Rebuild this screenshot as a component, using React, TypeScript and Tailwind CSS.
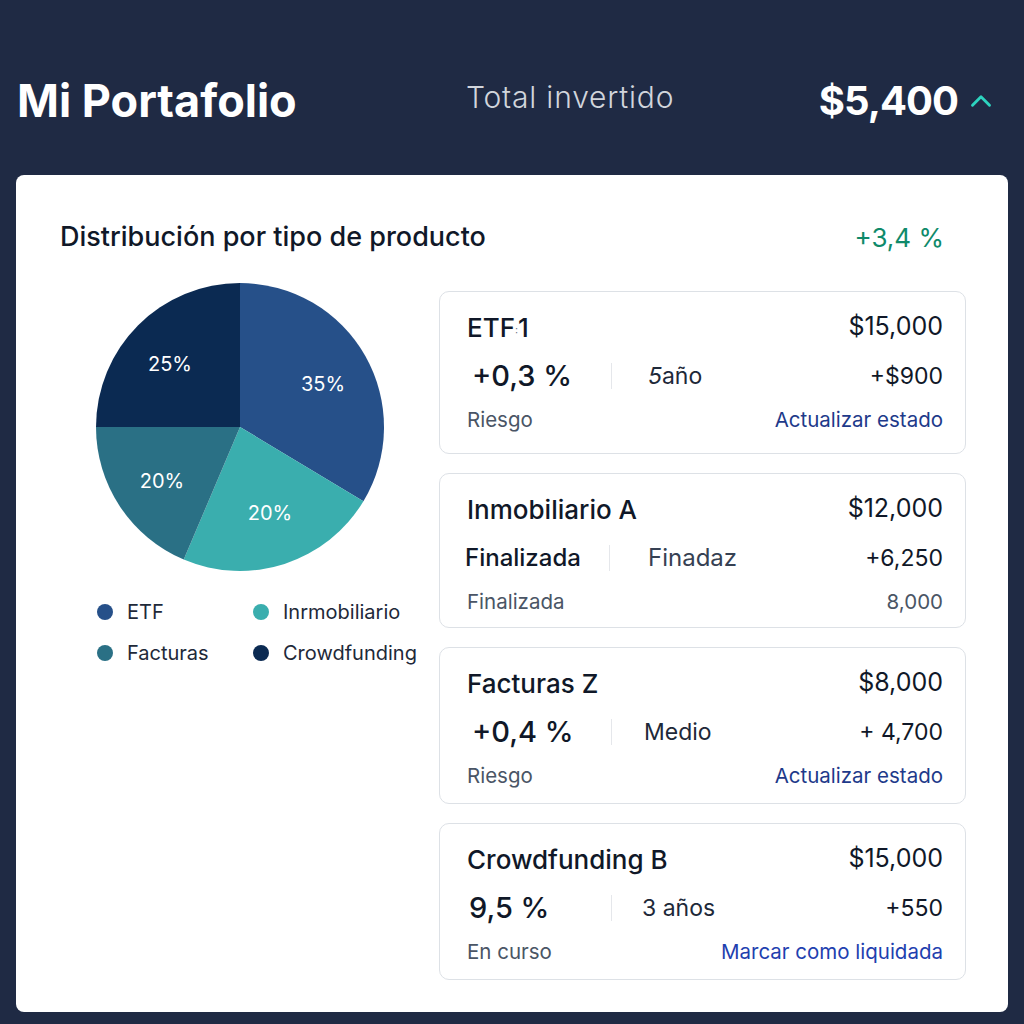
import { ChevronUp } from 'lucide-react';

type Product = {
  name: React.ReactNode;
  amount: string;
  rate: string;
  rateClass: string;
  middle: React.ReactNode;
  middleClass: string;
  gain: string;
  note: string;
  action: string;
  actionClass: string;
  height: string;
};

const products: Product[] = [
  {
    name: (
      <>
        ETF<span className="text-[11px] text-gray-500 align-middle">꞉</span>1
      </>
    ),
    amount: '$15,000',
    rate: '+0,3 %',
    rateClass: 'text-[29px] font-medium pl-[5px]',
    middle: (
      <>
        <span className="italic">5</span>año
      </>
    ),
    middleClass: 'pl-[36px] text-[23px] text-gray-800',
    gain: '+$900',
    note: 'Riesgo',
    action: 'Actualizar estado',
    actionClass: 'text-[#1e3a8a]',
    height: 'h-[163px]',
  },
  {
    name: 'Inmobiliario A',
    amount: '$12,000',
    rate: 'Finalizada',
    rateClass: 'text-[24px] font-medium -ml-[2px]',
    middle: 'Finadaz',
    middleClass: 'pl-[38px] text-[24px] text-gray-700',
    gain: '+6,250',
    note: 'Finalizada',
    action: '8,000',
    actionClass: 'text-gray-600',
    height: 'h-[155px]',
  },
  {
    name: 'Facturas Z',
    amount: '$8,000',
    rate: '+0,4 %',
    rateClass: 'text-[29px] font-medium pl-[5px]',
    middle: 'Medio',
    middleClass: 'pl-[32px] text-[23px] text-gray-800',
    gain: '+ 4,700',
    note: 'Riesgo',
    action: 'Actualizar estado',
    actionClass: 'text-[#1e3a8a]',
    height: 'h-[157px]',
  },
  {
    name: 'Crowdfunding B',
    amount: '$15,000',
    rate: '9,5 %',
    rateClass: 'text-[29px] font-medium pl-[2px]',
    middle: '3 años',
    middleClass: 'pl-[30px] text-[23px] text-gray-800',
    gain: '+550',
    note: 'En curso',
    action: 'Marcar como liquidada',
    actionClass: 'text-[#1e40af]',
    height: 'h-[157px]',
  },
];

const slices = [
  { from: 0, to: 121, color: '#265089', label: '35%', lx: 323, ly: 384 },
  { from: 121, to: 203, color: '#3aaeae', label: '20%', lx: 270, ly: 513 },
  { from: 203, to: 270, color: '#2a7085', label: '20%', lx: 162, ly: 481 },
  { from: 270, to: 360, color: '#0b2a52', label: '25%', lx: 170, ly: 364 },
];

function pt(cx: number, cy: number, r: number, deg: number) {
  const a = ((deg - 90) * Math.PI) / 180;
  return [cx + r * Math.cos(a), cy + r * Math.sin(a)];
}

function Pie() {
  const cx = 145;
  const cy = 145;
  const r = 144;
  return (
    <svg width="290" height="290" viewBox="0 0 290 290">
      {slices.map((s) => {
        const [x1, y1] = pt(cx, cy, r, s.from);
        const [x2, y2] = pt(cx, cy, r, s.to);
        const large = s.to - s.from > 180 ? 1 : 0;
        return (
          <path
            key={s.from}
            d={`M${cx} ${cy} L${x1} ${y1} A${r} ${r} 0 ${large} 1 ${x2} ${y2} Z`}
            fill={s.color}
          />
        );
      })}
      {slices.map((s) => (
        <text
          key={s.label + s.lx}
          x={s.lx - 95}
          y={s.ly - 282 + 7}
          textAnchor="middle"
          fill="#ffffff"
          fontSize="20"
          fontFamily="Inter, sans-serif"
        >
          {s.label}
        </text>
      ))}
    </svg>
  );
}

const legend = [
  { label: 'ETF', color: 'bg-[#265089]' },
  { label: 'Inrmobiliario', color: 'bg-[#3aaeae]' },
  { label: 'Facturas', color: 'bg-[#2a7085]' },
  { label: 'Crowdfunding', color: 'bg-[#0b2a52]' },
];

function ProductCard({ p }: { p: Product }) {
  return (
    <div className={`${p.height} rounded-[10px] border border-[#dde1e6] pl-[27px] pr-[22px] pt-[19px]`}>
      <div className="h-[32px] flex items-center justify-between text-gray-900">
        <span className="text-[26px] font-medium">{p.name}</span>
        <span className="text-[25px]">{p.amount}</span>
      </div>
      <div className="mt-[13px] h-[40px] flex items-center text-gray-900">
        <div className={`w-[144px] ${p.rateClass}`}>{p.rate}</div>
        <div className="w-px h-[26px] bg-gray-200" />
        <div className={p.middleClass}>{p.middle}</div>
        <div className="ml-auto text-[23px]">{p.gain}</div>
      </div>
      <div className="mt-[10px] h-[28px] flex items-center justify-between text-[20.5px]">
        <span className="text-gray-600">{p.note}</span>
        <span className={p.actionClass}>{p.action}</span>
      </div>
    </div>
  );
}

export default function App() {
  return (
    <div className="min-h-screen bg-[#1f2a44] font-['Inter',sans-serif]">
      {/* Header */}
      <div className="h-[175px] pt-[26px] flex items-center pl-[17px] pr-[26px]">
        <h1 className="w-[449px] text-[45px] font-bold text-white">Mi Portafolio</h1>
        <div className="text-[30px] font-light text-gray-300 tracking-[0.8px] -mt-[6px]">Total invertido</div>
        <div className="ml-auto flex items-center gap-[6px]">
          <span className="text-[40px] font-bold text-white tracking-[-1px]">$5,400</span>
          <ChevronUp className="w-[34px] h-[34px] text-[#2dd4bf]" strokeWidth={2} />
        </div>
      </div>

      {/* Card */}
      <div className="mx-[16px] h-[837px] bg-white rounded-[8px] pl-[44px] pr-[42px] pt-[46px]">
        <div className="h-[32px] flex items-center justify-between pr-[22px]">
          <h2 className="text-[27px] font-medium text-gray-900">Distribución por tipo de producto</h2>
          <span className="text-[26px] text-[#0f8a6a]">+3,4 %</span>
        </div>

        <div className="mt-[38px] flex">
          {/* Chart */}
          <div className="w-[379px] -mt-[9px]">
            <div className="ml-[35px]">
              <Pie />
            </div>
            <div className="mt-[26px] ml-[37px] grid grid-cols-[156px_1fr] gap-y-[13px] text-[20px] text-gray-800">
              {legend.map((l) => (
                <div key={l.label} className="h-[28px] flex items-center">
                  <span className={`w-[16px] h-[16px] rounded-full ${l.color}`} />
                  <span className="ml-[14px]">{l.label}</span>
                </div>
              ))}
            </div>
          </div>

          {/* Products */}
          <div className="flex-1 flex flex-col gap-[19px]">
            {products.map((p, i) => (
              <ProductCard key={i} p={p} />
            ))}
          </div>
        </div>
      </div>
    </div>
  );
}
